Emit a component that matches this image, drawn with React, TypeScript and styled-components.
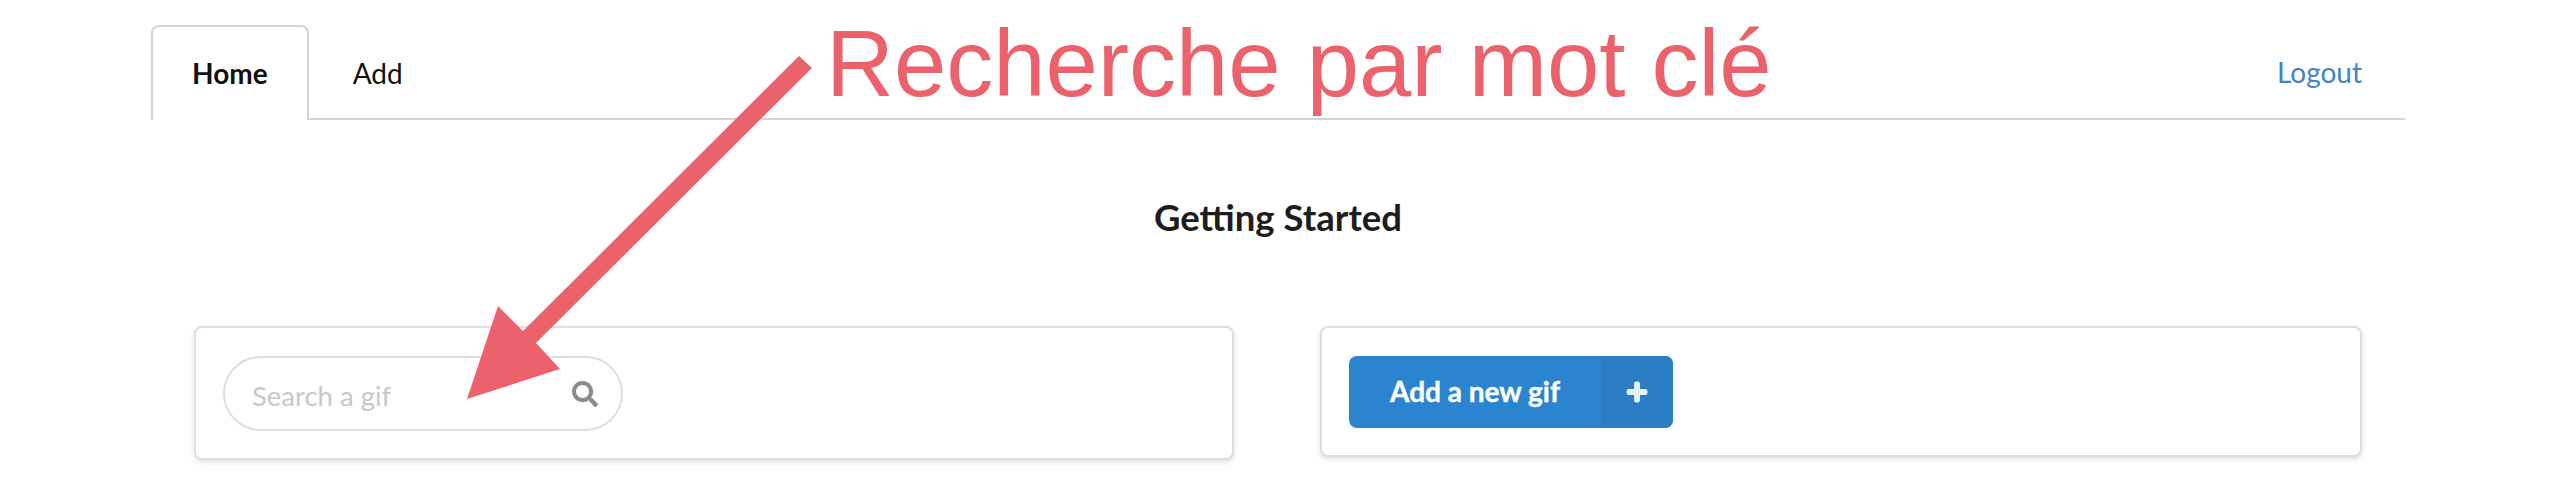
import React from 'react';
import styled, { createGlobalStyle } from 'styled-components';
import { FaPlus, FaSearch } from 'react-icons/fa';

const GlobalStyle = createGlobalStyle`
    html, body {
        margin: 0;
        background: #fff;
    }
    body {
        font-family: Lato, "Helvetica Neue", Arial, sans-serif;
        color: rgba(0, 0, 0, 0.87);
    }
`;

const Page = styled.div`
    position: relative;
    width: 2550px;
    height: 503px;
    overflow: hidden;
    padding: 25px 145px 0 151px;
    box-sizing: border-box;
`;

const Menu = styled.nav`
    display: flex;
    align-items: flex-start;
    height: 93px;
    border-bottom: 2px solid #d4d4d5;
`;

const Tab = styled.a<{ $active?: boolean }>`
    display: flex;
    align-items: center;
    box-sizing: border-box;
    height: ${(p) => (p.$active ? '95px' : '93px')};
    padding: ${(p) => (p.$active ? '0 39px 2px' : '2px 44px 0')};
    font-size: 28px;
    line-height: 40px;
    font-weight: ${(p) => (p.$active ? 700 : 400)};
    color: #111;
    background: #fff;
    border: ${(p) => (p.$active ? '2px solid #d4d4d5' : 'none')};
    border-bottom: none;
    border-radius: 8px 8px 0 0;
`;

const Logout = styled.a`
    display: flex;
    align-items: center;
    height: 93px;
    margin-left: auto;
    padding-right: 43px;
    font-size: 28px;
    color: #4183c4;
`;

const Heading = styled.h3`
    margin: 0;
    padding-top: 74px;
    text-align: center;
    font-size: 36.5px;
    line-height: 46px;
    font-weight: 700;
    color: #1d1d1d;
`;

const Columns = styled.div`
    display: grid;
    grid-template-columns: 1040px 1042px;
    justify-content: space-between;
    align-items: start;
    padding: 0 43px;
    margin-top: 86px;
`;

const Card = styled.section`
    box-sizing: border-box;
    padding: 28px 27px 27px;
    background: #fff;
    border: 2px solid #dededf;
    border-radius: 8px;
    box-shadow: 0 2px 5px rgba(34, 36, 38, 0.15);
`;

const SearchBox = styled.div`
    display: flex;
    align-items: center;
    justify-content: space-between;
    box-sizing: border-box;
    width: 400px;
    height: 75px;
    padding: 0 23px 0 27px;
    border: 2px solid #dedede;
    border-radius: 38px;
`;

const Placeholder = styled.span`
    padding-top: 3px;
    font-size: 27.5px;
    color: #c8c8c8;
`;

const SearchIcon = styled(FaSearch)`
    width: 26px;
    height: 26px;
    color: #8c8c8c;
`;

const AddButton = styled.button`
    display: flex;
    align-items: stretch;
    width: 324px;
    height: 72px;
    padding: 0;
    border: none;
    border-radius: 8px;
    overflow: hidden;
    background: #2b84cf;
    color: #fff;
    font-family: inherit;
    font-size: 28px;
    font-weight: 700;
`;

const ButtonLabel = styled.span`
    display: flex;
    align-items: center;
    justify-content: center;
    width: 252px;
    padding-bottom: 2px;
    -webkit-text-stroke: 0.4px #fff;
`;

const ButtonIcon = styled.span`
    display: flex;
    align-items: center;
    justify-content: center;
    flex: 1;
    background: #2a7dc5;
    font-size: 22px;
    color: #e8f1f9;
`;

const PlusIcon = styled(FaPlus)`
    stroke: currentColor;
    stroke-width: 40px;
`;

const Annotation = styled.div`
    position: absolute;
    left: 826px;
    top: 10px;
    font-family: "Liberation Sans", Arial, sans-serif;
    font-size: 94px;
    line-height: 108px;
    white-space: nowrap;
    color: #ec626c;
`;

const ArrowLayer = styled.svg`
    position: absolute;
    left: 0;
    top: 0;
    pointer-events: none;
`;

export default function App() {
    return (
        <Page>
            <GlobalStyle />
            <Menu>
                <Tab $active>Home</Tab>
                <Tab>Add</Tab>
                <Logout>Logout</Logout>
            </Menu>
            <Heading>Getting Started</Heading>
            <Columns>
                <Card>
                    <SearchBox>
                        <Placeholder>Search a gif</Placeholder>
                        <SearchIcon />
                    </SearchBox>
                </Card>
                <Card>
                    <AddButton>
                        <ButtonLabel>Add a new gif</ButtonLabel>
                        <ButtonIcon>
                            <PlusIcon />
                        </ButtonIcon>
                    </AddButton>
                </Card>
            </Columns>
            <Annotation>Recherche par mot clé</Annotation>
            <ArrowLayer width="2550" height="503" viewBox="0 0 2550 503">
                <polygon
                    points="799,56 812,68 536,343 560,369 467,399 498,306 523,331"
                    fill="#ec626c"
                />
            </ArrowLayer>
        </Page>
    );
}
